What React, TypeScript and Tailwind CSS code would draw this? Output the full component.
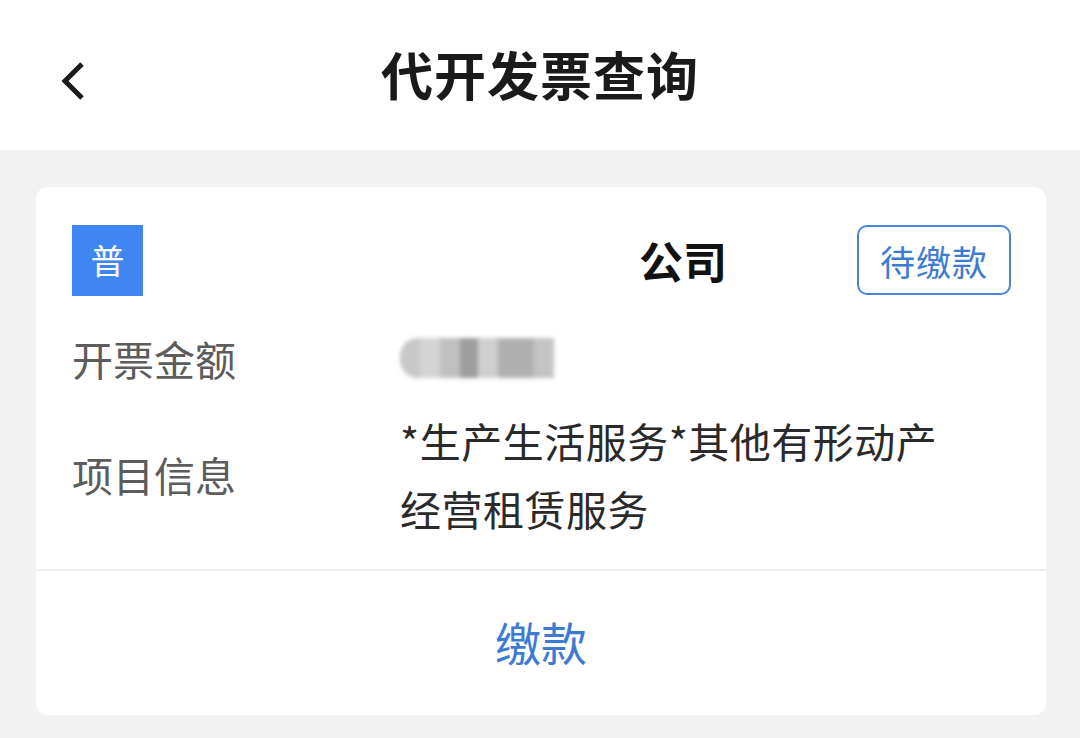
import React from "react";

export default function App() {
  const font = { fontFamily: '"Noto Sans CJK SC", "Noto Sans", sans-serif' };
  return (
    <div className="w-[1080px] h-[738px] bg-[#f2f2f2] overflow-hidden" style={font}>
      <div className="relative h-[150px] bg-white flex items-center justify-center">
        <svg className="absolute left-[56px] top-[60px]" width="32" height="42" viewBox="0 0 32 42">
          <path d="M26 4 L9 21 L26 38" fill="none" stroke="#1a1a1a" strokeWidth="5" strokeLinecap="butt" strokeLinejoin="miter" />
        </svg>
        <div className="text-[52px] font-bold text-[#1a1a1a] leading-none tracking-[1px] -mt-[2px]">代开发票查询</div>
      </div>
      <div className="ml-[36px] w-[1010px] mt-[37px] bg-white rounded-[12px] overflow-hidden">
        <div className="pl-[36px] pr-[35px] pt-[36px]">
          <div className="flex items-center h-[74px]">
            <div className="w-[71px] h-[71px] bg-[#3f86f2] flex items-center justify-center text-white text-[34px] leading-none">普</div>
            <div className="flex-1 text-right pr-[130px] text-[44px] font-bold text-[#111] leading-none">公司</div>
            <div className="w-[154px] h-[70px] border-2 border-[#4a84d6] rounded-[10px] flex items-center justify-center text-[35px] text-[#3d7bd2] leading-none tracking-[1px]">待缴款</div>
          </div>
          <div className="mt-[20px] flex items-center h-[82px]">
            <div className="w-[328px] text-[41px] text-[#5c5c5c] leading-none">开票金额</div>
            <div className="relative w-[170px] h-[40px]">
              <div className="absolute inset-0 flex blur-[2px] rounded-l-[18px] overflow-hidden">
                <div className="w-[20px] h-full bg-[#c8c8c8]" />
                <div className="w-[20px] h-full bg-[#d4d4d4]" />
                <div className="w-[20px] h-full bg-[#c0c0c0]" />
                <div className="w-[18px] h-full bg-[#9e9e9e]" />
                <div className="w-[20px] h-full bg-[#cfcfcf]" />
                <div className="w-[36px] h-full bg-[#b0b0b0]" />
                <div className="w-[20px] h-full bg-[#c4c4c4]" />
              </div>
            </div>
          </div>
          <div className="mt-[7px] flex items-center pb-[27px]">
            <div className="w-[328px] text-[41px] text-[#5c5c5c] leading-none">项目信息</div>
            <div className="flex-1 text-[41px] text-[#2a2a2a] leading-[68px] tracking-[0.5px]">
              <div>*生产生活服务*其他有形动产</div>
              <div>经营租赁服务</div>
            </div>
          </div>
        </div>
        <div className="h-[2px] bg-[#eeeeee]" />
        <div className="h-[144px] flex items-center justify-center pb-[4px] text-[46px] text-[#3d7bd2] leading-none">缴款</div>
      </div>
    </div>
  );
}
